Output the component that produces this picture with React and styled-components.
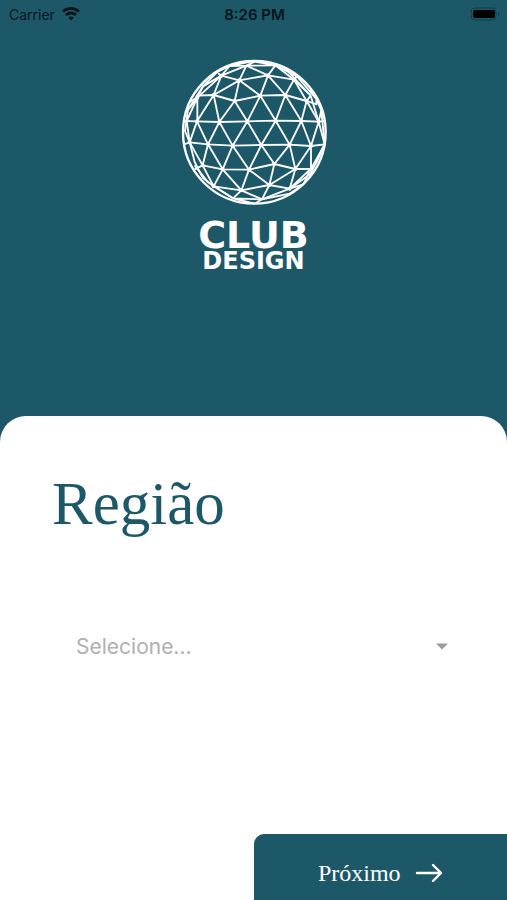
import * as React from "react";
import styled, { createGlobalStyle } from "styled-components";

const regions = ["Norte", "Nordeste", "Centro-Oeste", "Sudeste", "Sul"];

export default function App() {
  const [region, setRegion] = React.useState("");

  return (
    <Screen>
      <GlobalStyle />
      <StatusBar>
        <Carrier>
          Carrier
          <WifiIcon />
        </Carrier>
        <Clock>8:26 PM</Clock>
        <BatteryIcon />
      </StatusBar>

      <Brand>
        <Globe />
        <BrandName>CLUB</BrandName>
        <BrandSub>DESIGN</BrandSub>
      </Brand>

      <Panel>
        <Title>
          <label htmlFor="region">Região</label>
        </Title>
        <SelectBox>
          <Select
            id="region"
            value={region}
            onChange={(e) => setRegion(e.target.value)}
          >
            <option value="">Selecione...</option>
            {regions.map((name) => (
              <option key={name} value={name}>
                {name}
              </option>
            ))}
          </Select>
          <svg width="12" height="7" viewBox="0 0 12 7" aria-hidden="true">
            <path d="M0 0.5h12L6 6.5z" fill="#9c9c9c" />
          </svg>
        </SelectBox>
        <NextButton type="button">
          Próximo
          <ArrowIcon />
        </NextButton>
      </Panel>
    </Screen>
  );
}

function WifiIcon() {
  return (
    <svg width="18" height="14" viewBox="0 0 18 14" aria-hidden="true">
      <g fill="none" stroke="#06151b" strokeWidth="2.8">
        <path d="M1 4.6a11.5 11.5 0 0 1 16 0" />
        <path d="M4 8a7.2 7.2 0 0 1 10 0" />
      </g>
      <path d="M9 13.6L6.2 10.8a4 4 0 0 1 5.6 0z" fill="#06151b" />
    </svg>
  );
}

function BatteryIcon() {
  return (
    <svg width="30" height="14" viewBox="0 0 30 14" aria-hidden="true">
      <rect x="1" y="1" width="25" height="12" rx="4" fill="none" stroke="#123c49" />
      <rect x="3" y="3" width="22" height="8" rx="2" fill="#000" />
      <path d="M28 5c1.6.8 1.6 3.2 0 4z" fill="#123c49" />
    </svg>
  );
}

function ArrowIcon() {
  return (
    <svg width="28" height="20" viewBox="0 0 28 20" aria-hidden="true">
      <path
        d="M2 10H26M18 2L26 10L18 18"
        fill="none"
        stroke="#fff"
        strokeWidth="2.4"
        strokeLinecap="round"
        strokeLinejoin="round"
      />
    </svg>
  );
}

function Globe() {
  return (
    <svg width="146" height="146" viewBox="19 26 438 438" role="img" aria-label="Club Design">
      <g fill="none" stroke="#fff" strokeWidth="5.5" strokeLinejoin="round">
        <circle cx="239" cy="246" r="214" strokeWidth="7" />
        {/* rows */}
        <path d="M165 47L215 46L302 45M215 46L240 34L302 45" />
        <path d="M130 69L140 76L194 90L280 75L358 88L302 45" />
        <path d="M45 155L68 142L68 136L117 134L180 152L257 136L332 134L396 152L428 163" />
        <path d="M27 212L67 213L134 215L218 213L303 211L380 212L432 214L452 212" />
        <path d="M26 283L45 276L100 282L174 286L260 284L345 283L409 287L450 282" />
        <path d="M60 357L84 345L144 357L223 358L299 341L362 356L408 356" />
        <path d="M84 382L117 408L200 420L284 404L345 415L386 402" />
        <path d="M117 408L175 444L262 447L345 415M175 444L240 460L262 447" />
        {/* zigzags between the rows */}
        <path d="M165 47L140 76L215 46L194 90M215 46L280 75L302 45" />
        <path d="M68 142L140 76L117 134L194 90L180 152M194 90L257 136L280 75L332 134L358 88L396 152" />
        <path d="M117 134L67 213M36 212L68 142V213M117 134L134 215L180 152L218 213L257 136L303 211L332 134L380 212L396 152L432 214" />
        <path d="M36 212L45 276L67 213L100 282L134 215L174 286L218 213L260 284L303 211L345 283L380 212L409 287L432 214L450 282" />
        <path d="M45 276L84 345L100 282L144 357L174 286L223 358L260 284L299 341L345 283L362 356L409 287V356L450 282" />
        <path d="M84 345L117 408L144 357L200 420L223 358L284 404L299 341M284 404L362 356L345 415L408 356" />
        <path d="M200 420L175 444M200 420L262 447L284 404" />
        {/* facets near the rim */}
        <path d="M140 76L85 108L68 142L40 178L31 242L45 276L60 335L84 382" />
        <path d="M117 70L165 47L228 34M85 108L130 62M40 178L85 108" />
        <path d="M302 45L367 78L358 88L408 136L396 152M332 55L408 136L432 214" />
        <path d="M367 78L425 146L440 180L432 214M408 118L425 146V160" />
        <path d="M440 180L450 282L425 338L408 356L386 402L345 430L262 447" />
        <path d="M450 282L408 370L345 415M60 345L100 396L175 444" />
      </g>
      <g fill="#fff">
        {joints.map(([x, y]) => (
          <circle key={`${x}-${y}`} cx={x} cy={y} r="6" />
        ))}
      </g>
    </svg>
  );
}

const joints = [
  [140, 76], [194, 90], [280, 75], [358, 88],
  [68, 142], [117, 134], [180, 152], [257, 136], [332, 134], [396, 152],
  [67, 213], [134, 215], [218, 213], [303, 211], [380, 212], [432, 214],
  [45, 276], [100, 282], [174, 286], [260, 284], [345, 283], [409, 287],
  [84, 345], [144, 357], [223, 358], [299, 341], [362, 356],
  [117, 408], [200, 420], [284, 404], [345, 415],
];

const GlobalStyle = createGlobalStyle`
  * {
    box-sizing: border-box;
  }
  body {
    margin: 0;
    background: #1d5869;
  }
`;

const Screen = styled.div`
  min-height: 100vh;
  display: flex;
  flex-direction: column;
  background: #1d5869;
`;

const StatusBar = styled.div`
  display: grid;
  grid-template-columns: 1fr auto 1fr;
  align-items: center;
  height: 28px;
  padding: 0 7px 0 9px;
  color: #06151b;
  font-family: Inter, sans-serif;
  font-size: 14px;
  svg:last-child {
    justify-self: end;
  }
`;

const Carrier = styled.div`
  display: flex;
  align-items: center;
  gap: 7px;
`;

const Clock = styled.div`
  font-size: 15px;
  font-weight: 600;
`;

const Brand = styled.header`
  display: flex;
  flex-direction: column;
  align-items: center;
  padding-top: 31px;
  height: 388px;
  color: #fff;
  font-family: "DejaVu Sans", sans-serif;
  font-weight: bold;
`;

const BrandName = styled.div`
  margin-top: 14px;
  font-size: 38px;
  line-height: 32px;
`;

const BrandSub = styled.div`
  font-size: 24px;
  line-height: 20px;
`;

const Panel = styled.main`
  flex: 1;
  display: flex;
  flex-direction: column;
  background: #fff;
  border-radius: 26px 26px 0 0;
`;

const Title = styled.h1`
  margin: 54px 52px 0;
  color: #1d5869;
  font-family: "Liberation Serif", serif;
  font-size: 61px;
  font-weight: normal;
  line-height: 68px;
`;

const SelectBox = styled.div`
  display: flex;
  align-items: center;
  height: 60px;
  margin: 78px 52px 0;
  padding: 0 7px 0 24px;
`;

const Select = styled.select`
  flex: 1;
  min-width: 0;
  height: 40px;
  padding: 0;
  border: none;
  background: transparent;
  appearance: none;
  color: #b0b0b0;
  font-family: Inter, sans-serif;
  font-size: 21px;
`;

const NextButton = styled.button`
  display: flex;
  align-items: center;
  justify-content: center;
  gap: 14px;
  width: 50%;
  height: 66px;
  margin-top: auto;
  margin-left: auto;
  padding: 12px 0 0;
  border: none;
  border-radius: 10px 0 0 0;
  background: #1d5869;
  color: #fff;
  font-family: "Liberation Serif", serif;
  font-size: 24px;
  cursor: pointer;
`;
